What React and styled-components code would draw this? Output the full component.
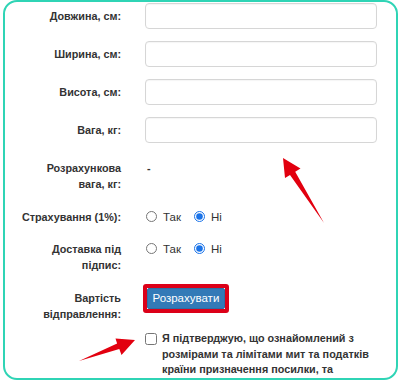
import React from "react"
import styled, { createGlobalStyle } from "styled-components"

const GlobalStyle = createGlobalStyle`
  html, body {
    margin: 0;
    padding: 0;
    background: #fff;
  }
  body {
    font-family: "Liberation Sans", Arial, sans-serif;
    color: #333;
  }
`;

const Page = styled.div`
  position: relative;
  width: 400px;
  height: 383px;
  overflow: hidden;
`;

const Frame = styled.div`
  box-sizing: border-box;
  margin: 0 2px 0 3px;
  height: 380px;
  border: 2.5px solid #2fd4b5;
  border-radius: 14px;
  overflow: hidden;
  padding: 0 19px 0 0;
`;

const Form = styled.div`
  display: flex;
  flex-direction: column;
  font-size: 10.8px;
  line-height: 16px;
`;

const Row = styled.div`
  display: grid;
  grid-template-columns: 116px 1fr;
  column-gap: 24px;
  align-items: ${p => (p.$top ? "start" : "center")};
  margin-top: ${p => p.$mt || 0}px;
`;

const Label = styled.div`
  text-align: right;
  font-weight: bold;
  color: #333;
  padding-top: ${p => p.$pt || 0}px;
`;

const Input = styled.input`
  box-sizing: border-box;
  width: 100%;
  height: 26px;
  border: 1px solid #d6d6d6;
  border-radius: 4px;
  box-shadow: inset 0 1px 1px rgba(0, 0, 0, 0.04);
  background: #fff;
  outline: none;
`;

const Value = styled.div`
  padding-left: 2px;
  font-weight: bold;
`;

const Radios = styled.div`
  display: flex;
  align-items: center;
  gap: 12px;
  font-size: 11.5px;
`;

const RadioOption = styled.label`
  display: flex;
  align-items: center;
  gap: 6px;
  color: #333;
`;

const Radio = styled.input`
  width: 11px;
  height: 11px;
  margin: 0 0 0 1px;
  accent-color: #1a73e8;
`;

const Highlight = styled.div`
  display: inline-flex;
  border: 4px solid #dc0018;
  border-radius: 3px;
  margin-left: -2px;
  justify-self: start;
`;

const Button = styled.button`
  font-family: "Liberation Sans", Arial, sans-serif;
  font-size: 11.5px;
  color: #fff;
  background: #337ab7;
  border: 1px solid #2e6da4;
  border-radius: 2px;
  height: 21px;
  padding: 0 4.5px;
  cursor: pointer;
`;

const Confirm = styled.label`
  grid-column: 2;
  display: flex;
  align-items: flex-start;
  gap: 5px;
  font-weight: bold;
  line-height: 15.5px;
  color: #333;
`;

const Check = styled.input`
  flex: none;
  width: 12px;
  height: 12px;
  margin: 2px 0 0 0;
`;

const Overlay = styled.svg`
  position: absolute;
  left: 0;
  top: 0;
  pointer-events: none;
`;

const Arrows = () => (
  <Overlay width="400" height="383" viewBox="0 0 400 383">
    <polygon
      points="283,158 300.5,168.5 295.2,171.7 324,223 290,174.9 285,178"
      fill="#e2000f"
    />
    <polygon
      points="135,340 121.5,355 119.3,349.1 79,361 117.1,343.5 115.5,338.5"
      fill="#e2000f"
    />
  </Overlay>
);

const fields = ["Довжина, см:", "Ширина, см:", "Висота, см:", "Вага, кг:"];

const YesNo = ({ name }) => (
  <Radios>
    <RadioOption>
      <Radio type="radio" name={name} /> Так
    </RadioOption>
    <RadioOption>
      <Radio type="radio" name={name} defaultChecked /> Ні
    </RadioOption>
  </Radios>
);

export default function App() {
  return (
    <Page>
      <GlobalStyle />
      <Frame>
        <Form>
          {fields.map((f, i) => (
            <Row key={f} $mt={i === 0 ? 0.5 : 12}>
              <Label>{f}</Label>
              <Input type="text" />
            </Row>
          ))}

          <Row $top $mt={17}>
            <Label>
              Розрахункова
              <br />
              вага, кг:
            </Label>
            <Value>-</Value>
          </Row>

          <Row $mt={17}>
            <Label>Страхування (1%):</Label>
            <YesNo name="insurance" />
          </Row>

          <Row $top $mt={16}>
            <Label>
              Доставка під
              <br />
              підпис:
            </Label>
            <YesNo name="signature" />
          </Row>

          <Row $top $mt={11}>
            <Label $pt={6}>
              Вартість
              <br />
              відправлення:
            </Label>
            <Highlight>
              <Button type="button">Розрахувати</Button>
            </Highlight>
          </Row>

          <Row $mt={9.5}>
            <Confirm>
              <Check type="checkbox" />
              <span>
                Я підтверджую, що ознайомлений з
                <br />
                розмірами та лімітами мит та податків
                <br />
                країни призначення посилки, та
              </span>
            </Confirm>
          </Row>
        </Form>
      </Frame>
      <Arrows />
    </Page>
  );
}
